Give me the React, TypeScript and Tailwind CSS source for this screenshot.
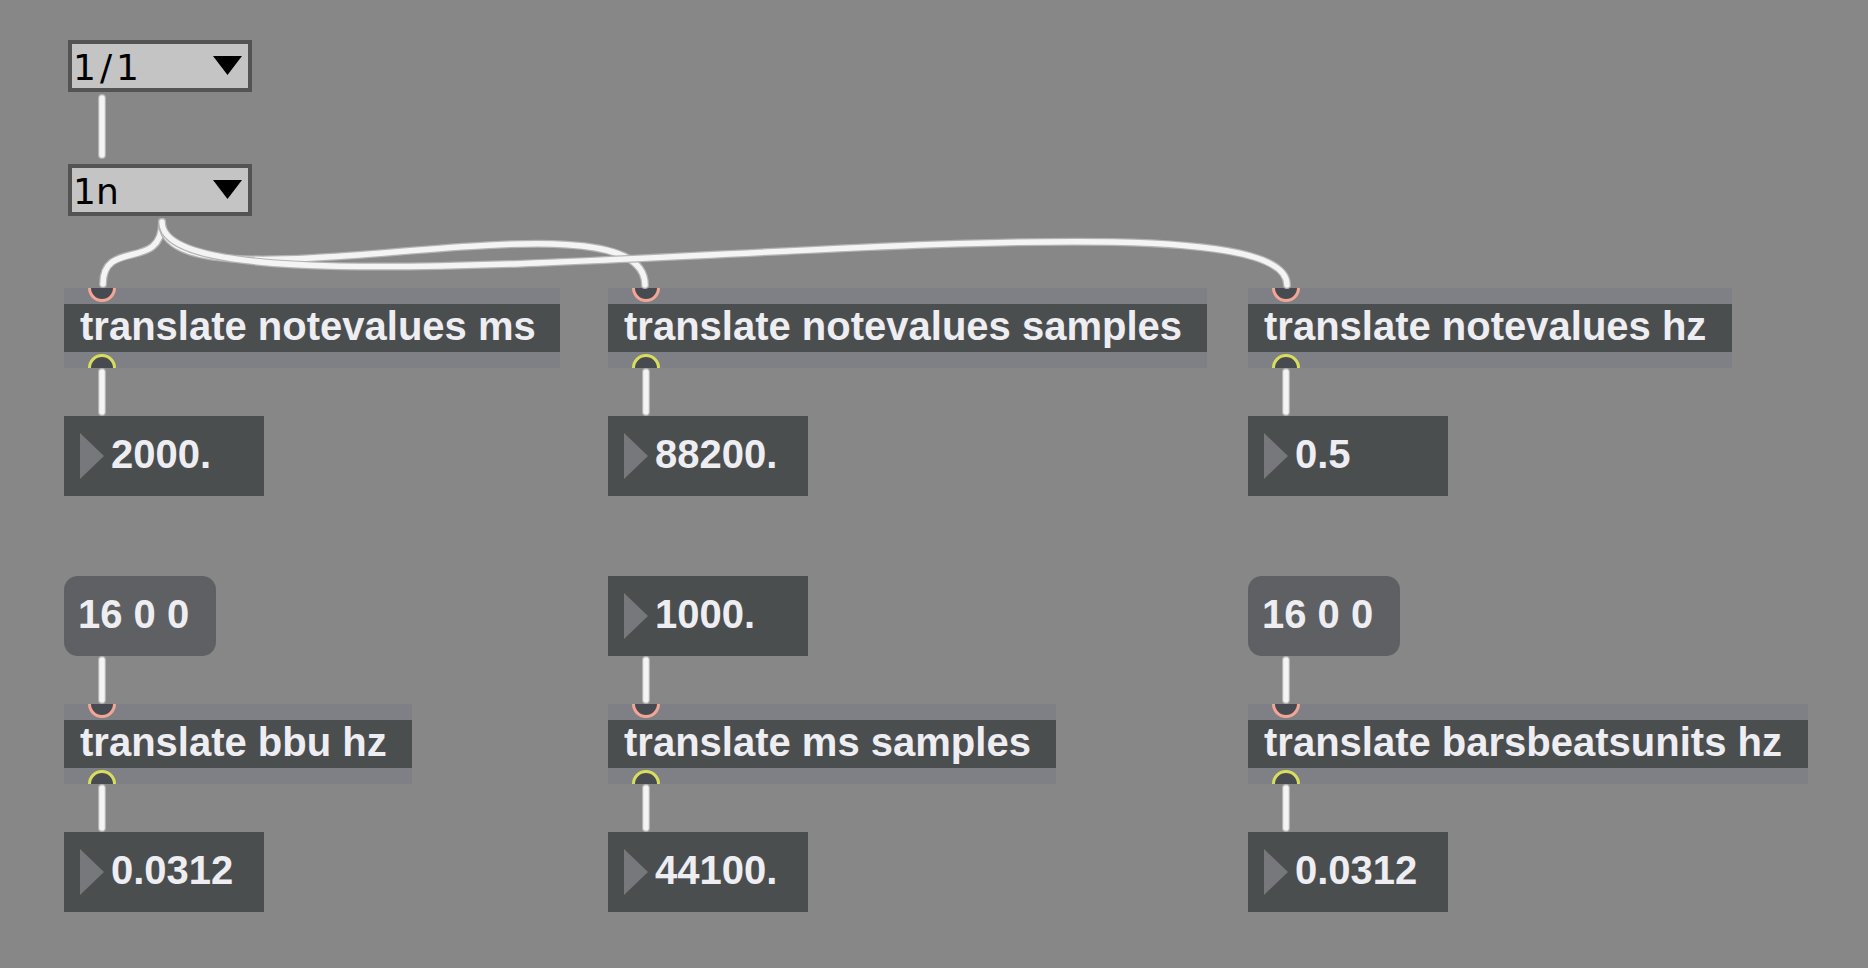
import React from "react";

// Max-style patch: translate objects converting note values etc.

function Inlet() {
  return (
    <div className="absolute left-[24px] top-[-14px] w-7 h-7 rounded-full border-[3px] border-[#f3a696] bg-[#474a50]" />
  );
}

function Outlet() {
  return (
    <div className="absolute left-[24px] top-[2px] w-7 h-7 rounded-full border-[3px] border-[#d8de5c] bg-[#474a50]" />
  );
}

function Translate({ text, width }: { text: string; width: string }) {
  return (
    <div className={`flex flex-col ${width}`}>
      <div className="relative h-4 overflow-hidden bg-[#7f8085]">
        <Inlet />
      </div>
      <div className="h-12 bg-[#4b4e4f] pl-4">
        <span className="block text-[40px] font-bold leading-[44px] text-[#ededf2] whitespace-nowrap">
          {text}
        </span>
      </div>
      <div className="relative h-4 overflow-hidden bg-[#7f8085]">
        <Outlet />
      </div>
    </div>
  );
}

function NumberBox({ value }: { value: string }) {
  return (
    <div className="flex h-20 w-[200px] bg-[#4b4e4f]">
      <svg className="ml-4 self-center" width="24" height="46" viewBox="0 0 24 46">
        <polygon points="0,0 24,23 0,46" fill="#76787c" />
      </svg>
      <span className="ml-[7px] self-start text-[40px] font-bold leading-[76px] text-[#ededf2]">
        {value}
      </span>
    </div>
  );
}

function Message({ text }: { text: string }) {
  return (
    <div className="flex h-20 w-[152px] rounded-[14px] bg-[#5f6064] pl-[14px]">
      <span className="text-[40px] font-bold leading-[76px] text-[#ededf2] whitespace-nowrap">
        {text}
      </span>
    </div>
  );
}

function Umenu({ label, tracking }: { label: string; tracking: string }) {
  return (
    <div className="flex h-[52px] w-[184px] justify-between border-4 border-[#545454] bg-[#c4c4c4]">
      <span
        className={`relative top-[2px] pl-[1px] font-['DejaVu_Sans',sans-serif] text-[36px] leading-[44px] text-black ${tracking}`}
      >
        {label}
      </span>
      <svg className="mr-[6px] mt-3" width="29" height="19" viewBox="0 0 29 19">
        <polygon points="0,0 29,0 14.5,19" fill="#000" />
      </svg>
    </div>
  );
}

const cords = [
  "M102,98 L102,155",
  "M162,222 C162,272 103,238 103,284",
  "M162,222 C162,321 645,180 645,285",
  "M162,222 C162,343 1287,166 1287,285",
  "M102,372 L102,412",
  "M646,372 L646,412",
  "M1286,372 L1286,412",
  "M102,660 L102,700",
  "M646,660 L646,700",
  "M1286,660 L1286,700",
  "M102,788 L102,828",
  "M646,788 L646,828",
  "M1286,788 L1286,828",
];

export default function App() {
  return (
    <div className="relative h-[968px] w-full overflow-hidden bg-[#878787] font-['Liberation_Sans',Arial,sans-serif]">
      <div className="pl-[68px] pt-[40px]">
        <Umenu label="1/1" tracking="tracking-[4px]" />
        <div className="mt-[72px]">
          <Umenu label="1n" tracking="tracking-normal" />
        </div>
      </div>

      {/* row 1: notevalues */}
      <div className="mt-[72px] grid grid-cols-[544px_640px_1fr] pl-[64px]">
        <div className="flex flex-col items-start gap-12">
          <Translate text="translate notevalues ms" width="w-[496px]" />
          <NumberBox value="2000." />
        </div>
        <div className="flex flex-col items-start gap-12">
          <Translate text="translate notevalues samples" width="w-[599px]" />
          <NumberBox value="88200." />
        </div>
        <div className="flex flex-col items-start gap-12">
          <Translate text="translate notevalues hz" width="w-[484px]" />
          <NumberBox value="0.5" />
        </div>
      </div>

      {/* row 2 */}
      <div className="mt-[80px] grid grid-cols-[544px_640px_1fr] pl-[64px]">
        <div className="flex flex-col items-start gap-12">
          <Message text="16 0 0" />
          <Translate text="translate bbu hz" width="w-[348px]" />
          <NumberBox value="0.0312" />
        </div>
        <div className="flex flex-col items-start gap-12">
          <NumberBox value="1000." />
          <Translate text="translate ms samples" width="w-[448px]" />
          <NumberBox value="44100." />
        </div>
        <div className="flex flex-col items-start gap-12">
          <Message text="16 0 0" />
          <Translate text="translate barsbeatsunits hz" width="w-[560px]" />
          <NumberBox value="0.0312" />
        </div>
      </div>

      {/* patch cords */}
      <svg className="pointer-events-none absolute inset-0" width="1868" height="968">
        {cords.map((d, i) => (
          <g key={i} fill="none" strokeLinecap="round">
            <path d={d} stroke="#b3b3b3" strokeWidth="8" />
            <path d={d} stroke="#f4f4f4" strokeWidth="5.5" />
          </g>
        ))}
      </svg>
    </div>
  );
}
